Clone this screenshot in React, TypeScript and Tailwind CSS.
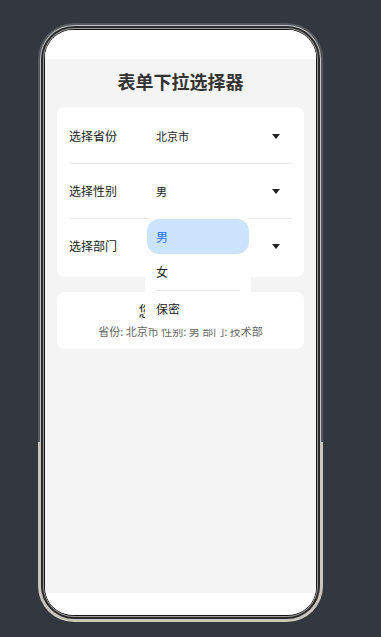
import React from "react"

const font = { fontFamily: '"Noto Sans CJK SC", "Noto Sans", sans-serif' }

type Row = { label: string; value: string }

const rows: Row[] = [
  { label: "选择省份", value: "北京市" },
  { label: "选择性别", value: "男" },
  { label: "选择部门", value: "" },
]

function Caret() {
  return (
    <svg width="8" height="5" viewBox="0 0 8 5" className="mr-[12px] text-[#222]">
      <path d="M0 0H8L4 5Z" fill="currentColor" />
    </svg>
  )
}

function SelectRow({ label, value }: Row) {
  return (
    <div className="flex h-[54px] items-center">
      <div className="w-[87px] text-[12px] text-[#222]">{label}</div>
      <div className="flex-1 text-[11px] text-[#222]">{value}</div>
      <Caret />
    </div>
  )
}

function Popup() {
  const options = ["男", "女", "保密"]
  return (
    <div className="absolute left-[88px] top-[109px] z-10 w-[106px] rounded-[10px] bg-white px-[2px] pb-[2px] pt-[3px]">
      {options.map((opt, i) => (
        <div key={opt}>
          {i === 2 && <div className="mx-[9px] h-px bg-[#e6e6e6]" />}
          <div
            className={
              i === 0
                ? "flex h-[35px] items-center rounded-[12px] bg-[#cce4fb] pl-[9px] text-[12px] text-[#1a73e8]"
                : "flex h-[36px] items-center pl-[9px] text-[12px] text-[#222]"
            }
          >
            {opt}
          </div>
        </div>
      ))}
    </div>
  )
}

export default function App() {
  return (
    <div className="h-[637px] w-[381px] overflow-hidden bg-[#333740] pl-[38px] pt-[23px]" style={font}>
      <div className="h-[599px] w-[285px] rounded-[36px] bg-[linear-gradient(to_bottom,#55585e_0%,#55585e_70%,#cdc7b5_70%,#cdc7b5_100%)] p-[2px]">
        <div className="h-full rounded-[34px] bg-[#c4c4c4] p-[1px]">
          <div className="h-full rounded-[33px] bg-[#2a2a2a] p-[2px]">
            <div className="h-full rounded-[31px] bg-[#9a9a9a] p-[1px]">
              <div className="h-full rounded-[30px] bg-[#141414] p-[1px]">
                <div className="flex h-full flex-col overflow-hidden rounded-[28px] bg-white">
                  <div className="h-[29px] bg-white" />
                  <div className="flex flex-1 flex-col bg-[#f4f4f4] px-[12px]">
                    <h1 className="pt-[10px] text-center text-[18px] font-bold leading-[25px] text-[#333]">
                      表单下拉选择器
                    </h1>
                    <div className="relative mt-[13px]">
                      <div className="rounded-[8px] bg-white px-[12px] pb-[4px] pt-[2px]">
                        {rows.map((r, i) => (
                          <div key={r.label}>
                            {i > 0 && <div className="h-px bg-[#ececec]" />}
                            <SelectRow {...r} />
                          </div>
                        ))}
                      </div>
                      <div className="mt-[15px] rounded-[8px] bg-white pb-[10px] pt-[8px] text-center">
                        <div className="text-[14px] leading-[20px] text-[#222]">您的选择结果</div>
                        <div className="mt-[3px] text-[11px] leading-[16px] text-[#666]">
                          省份: 北京市 性别: 男 部门: 技术部
                        </div>
                      </div>
                      <Popup />
                    </div>
                  </div>
                  <div className="h-[22px] bg-white" />
                </div>
              </div>
            </div>
          </div>
        </div>
      </div>
    </div>
  )
}
